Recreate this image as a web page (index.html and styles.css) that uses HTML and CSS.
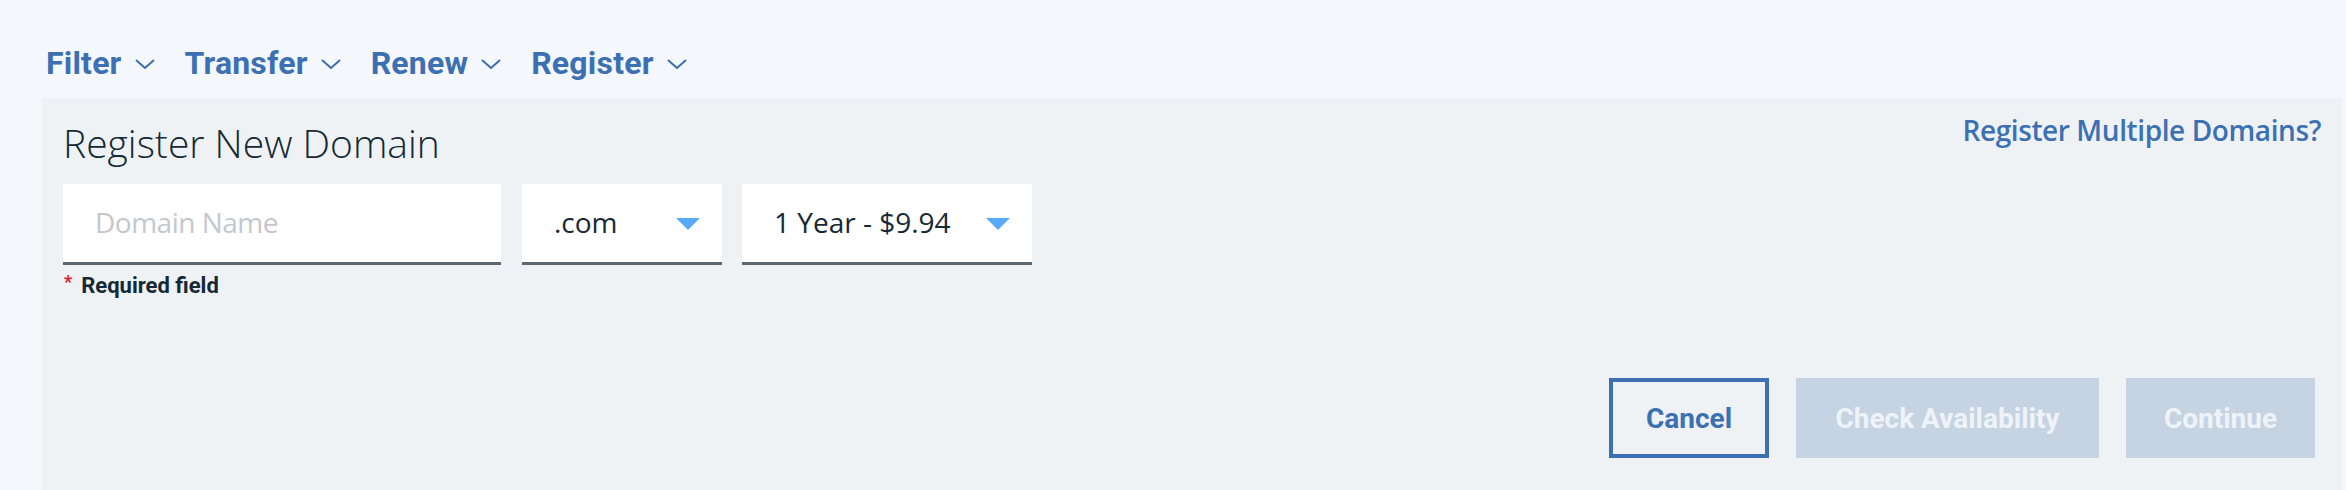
FILE: index.html
```html
<!DOCTYPE html>
<html lang="en">
<head>
<meta charset="utf-8">
<title>Register New Domain</title>
<link rel="stylesheet" href="styles.css">
</head>
<body>
  <nav class="tabs">
    <a class="tab" href="#">Filter<svg class="chev" viewBox="0 0 20 10"><path d="M1 1 L10 9 L19 1"/></svg></a>
    <a class="tab" href="#">Transfer<svg class="chev" viewBox="0 0 20 10"><path d="M1 1 L10 9 L19 1"/></svg></a>
    <a class="tab" href="#">Renew<svg class="chev" viewBox="0 0 20 10"><path d="M1 1 L10 9 L19 1"/></svg></a>
    <a class="tab" href="#">Register<svg class="chev" viewBox="0 0 20 10"><path d="M1 1 L10 9 L19 1"/></svg></a>
  </nav>
  <section class="panel">
    <header class="panel-head">
      <h1 class="title">Register New Domain</h1>
      <a class="multi" href="#">Register Multiple Domains?</a>
    </header>
    <div class="fields">
      <div class="field field-name"><span class="placeholder">Domain Name</span></div>
      <div class="field field-select field-tld"><span class="value">.com</span><span class="caret"></span></div>
      <div class="field field-select field-term"><span class="value">1 Year - $9.94</span><span class="caret"></span></div>
    </div>
    <p class="required"><span class="star">*</span>Required field</p>
    <div class="actions">
      <button class="btn btn-outline">Cancel</button>
      <button class="btn btn-disabled btn-check">Check Availability</button>
      <button class="btn btn-disabled btn-continue">Continue</button>
    </div>
  </section>
</body>
</html>
```

FILE: styles.css
```css
* { box-sizing: border-box; }
html, body { margin: 0; padding: 0; }
body {
  background: #f4f7fb;
  font-family: "Open Sans", "Liberation Sans", sans-serif;
  color: #152935;
  height: 490px;
  overflow: hidden;
}

.tabs {
  display: flex;
  align-items: flex-start;
  gap: 30px;
  padding: 43px 0 0 46px;
  height: 98px;
}
.tab {
  display: flex;
  align-items: center;
  gap: 13px;
  font-family: Roboto, "Liberation Sans", sans-serif;
  font-weight: 700;
  font-size: 32px;
  line-height: 40px;
  color: #3d70b2;
  text-decoration: none;
  letter-spacing: 0.2px;
}
.chev {
  width: 20px;
  height: 10px;
  margin-top: 2px;
  fill: none;
  stroke: #3d70b2;
  stroke-width: 2;
}

.panel {
  margin: 0 4px 0 42px;
  background: #eef2f5;
  padding: 14px 27px 0 21px;
  height: 392px;
}
.panel-head {
  display: flex;
  justify-content: space-between;
  align-items: flex-start;
}
.title {
  margin: 7px 0 0;
  font-weight: 300;
  font-size: 39px;
  line-height: 48px;
  color: #152935;
}
.multi {
  font-weight: 600;
  font-size: 28px;
  line-height: 36px;
  letter-spacing: -0.4px;
  color: #3d70b2;
  text-decoration: none;
  margin-right: -6px;
}

.fields {
  display: flex;
  gap: 20px;
  margin-top: 17px;
}
.field {
  height: 81px;
  background: #ffffff;
  border-bottom: 3px solid #5a6872;
  display: flex;
  align-items: center;
  padding: 0 22px 2px 32px;
  font-size: 28px;
  line-height: 38px;
}
.field-name { width: 438px; }
.field-tld { width: 200px; margin-left: 1px; }
.field-term { width: 290px; }
.field-select { justify-content: space-between; }
.placeholder { color: #c4c8cc; letter-spacing: -0.5px; }
.value { color: #152935; }
.caret {
  width: 0;
  height: 0;
  border-left: 12px solid transparent;
  border-right: 12px solid transparent;
  border-top: 12px solid #5aaafa;
  margin-top: 4px;
}

.required {
  margin: 8px 0 0 1px;
  font-family: Roboto, "Liberation Sans", sans-serif;
  font-weight: 700;
  font-size: 22px;
  line-height: 26px;
  color: #152935;
  display: flex;
  align-items: flex-start;
}
.star {
  color: #e0182d;
  font-size: 18px;
  line-height: 14px;
  margin-right: 9px;
  margin-top: 2px;
}

.actions {
  display: flex;
  justify-content: flex-end;
  gap: 27px;
  margin-top: 79px;
}
.btn {
  height: 80px;
  font-family: Roboto, "Liberation Sans", sans-serif;
  font-weight: 700;
  font-size: 28px;
  display: flex;
  align-items: center;
  justify-content: center;
  border: none;
}
.btn-outline {
  width: 160px;
  background: transparent;
  border: 4px solid #3d70b2;
  color: #3d70b2;
}
.btn-disabled {
  background: #c5d3e3;
  color: #eff3f8;
}
.btn-check { width: 303px; }
.btn-continue { width: 189px; }
```
